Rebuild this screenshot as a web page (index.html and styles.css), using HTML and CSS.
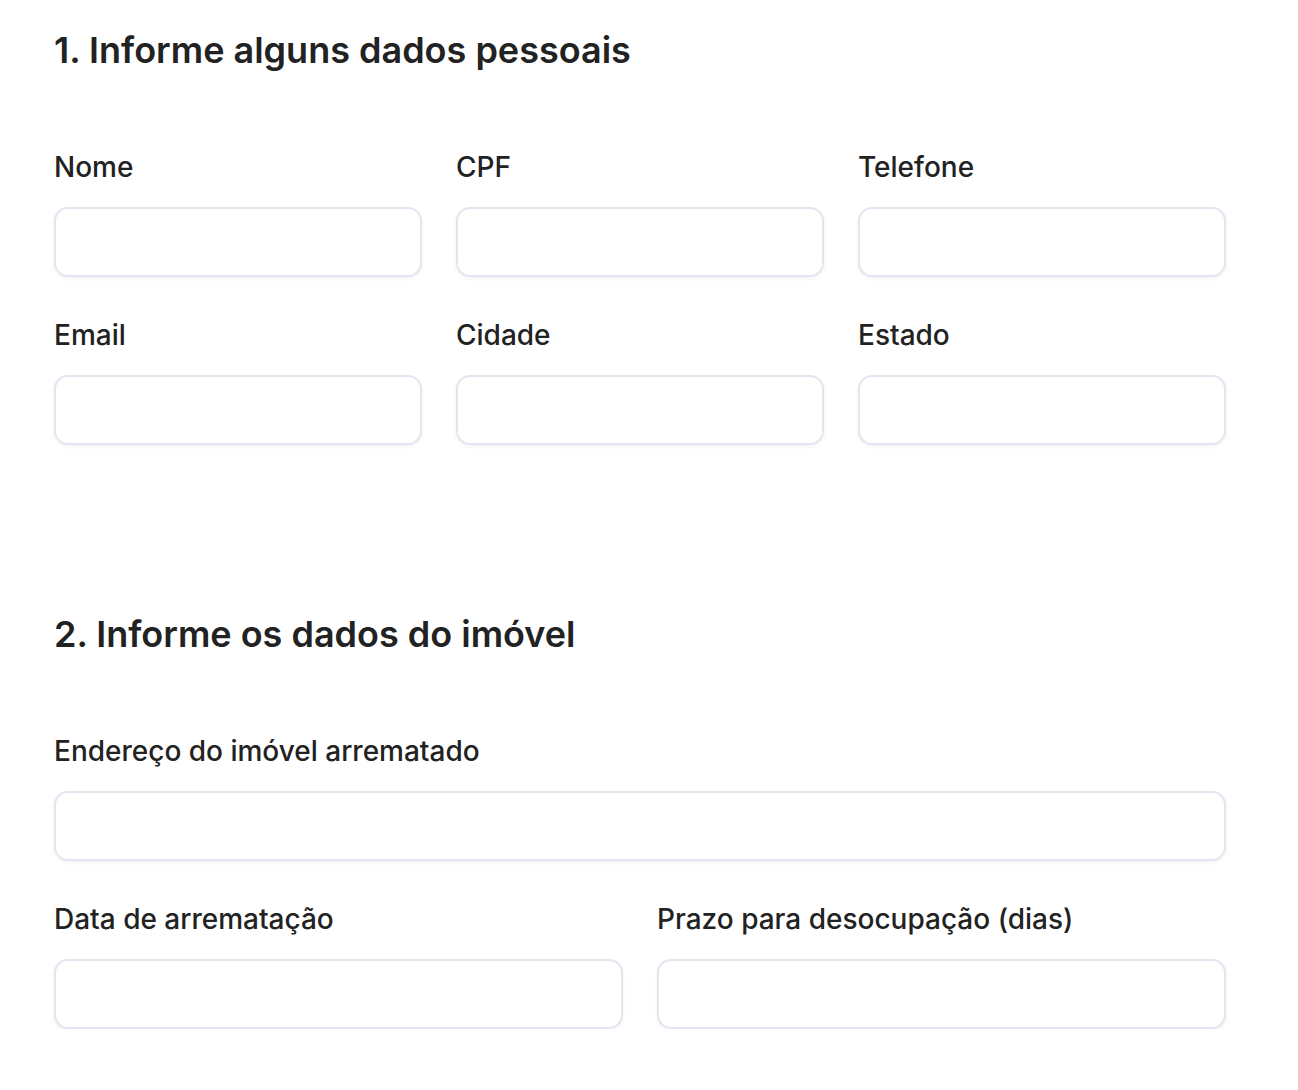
FILE: index.html
```html
<!DOCTYPE html>
<html lang="pt-BR">
<head>
<meta charset="utf-8">
<title>Formulário</title>
<link rel="stylesheet" href="styles.css">
</head>
<body>
<main class="page">
  <section class="section">
    <h2 class="section-title">1. Informe alguns dados pessoais</h2>
    <div class="grid grid-3">
      <label class="field"><span class="field-label">Nome</span><input class="field-input" type="text"></label>
      <label class="field"><span class="field-label">CPF</span><input class="field-input" type="text"></label>
      <label class="field"><span class="field-label">Telefone</span><input class="field-input" type="text"></label>
      <label class="field"><span class="field-label">Email</span><input class="field-input" type="text"></label>
      <label class="field"><span class="field-label">Cidade</span><input class="field-input" type="text"></label>
      <label class="field"><span class="field-label">Estado</span><input class="field-input" type="text"></label>
    </div>
  </section>
  <section class="section section-second">
    <h2 class="section-title">2. Informe os dados do imóvel</h2>
    <div class="grid grid-1">
      <label class="field"><span class="field-label">Endereço do imóvel arrematado</span><input class="field-input" type="text"></label>
    </div>
    <div class="grid grid-2">
      <label class="field"><span class="field-label">Data de arrematação</span><input class="field-input" type="text"></label>
      <label class="field"><span class="field-label">Prazo para desocupação (dias)</span><input class="field-input" type="text"></label>
    </div>
  </section>
</main>
</body>
</html>
```
FILE: styles.css
```css
* { box-sizing: border-box; }
html, body { margin: 0; background: #ffffff; }
body {
  font-family: Inter, "Noto Sans", "Liberation Sans", sans-serif;
  color: #222222;
}
.page {
  width: 1172px;
  margin-left: 54px;
  padding-top: 26px;
}
.section-title {
  margin: 0 0 75px 0;
  font-size: 36px;
  line-height: 48px;
  font-weight: 600;
}
.section-second { margin-top: 165px; }
.grid {
  display: grid;
  column-gap: 34px;
  row-gap: 40px;
}
.grid-3 { grid-template-columns: repeat(3, 1fr); }
.grid-2 { grid-template-columns: repeat(2, 1fr); margin-top: 40px; }
.grid-1 { grid-template-columns: 1fr; }
.field { display: flex; flex-direction: column; }
.field-label {
  font-size: 28px;
  line-height: 36px;
  font-weight: 500;
  margin-bottom: 22px;
}
.field-input {
  height: 70px;
  width: 100%;
  border: 2px solid #e3e6f0;
  border-radius: 14px;
  background: #fff;
  box-shadow: 0 2px 4px rgba(20, 30, 60, 0.05);
  font: inherit;
  padding: 0 16px;
  outline: none;
}
```
